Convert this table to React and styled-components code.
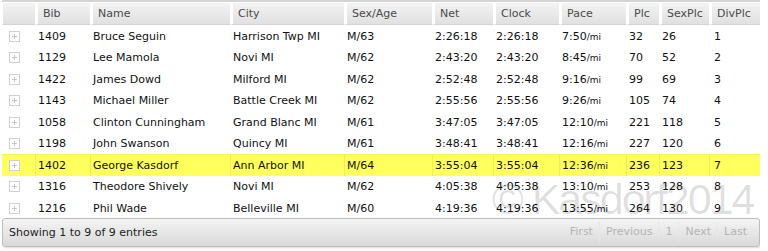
import React from 'react'
import styled, { createGlobalStyle } from 'styled-components';

const rows = [
  ['1409', 'Bruce Seguin', 'Harrison Twp MI', 'M/63', '2:26:18', '2:26:18', '7:50', '32', '26', '1'],
  ['1129', 'Lee Mamola', 'Novi MI', 'M/62', '2:43:20', '2:43:20', '8:45', '70', '52', '2'],
  ['1422', 'James Dowd', 'Milford MI', 'M/62', '2:52:48', '2:52:48', '9:16', '99', '69', '3'],
  ['1143', 'Michael Miller', 'Battle Creek MI', 'M/62', '2:55:56', '2:55:56', '9:26', '105', '74', '4'],
  ['1058', 'Clinton Cunningham', 'Grand Blanc MI', 'M/61', '3:47:05', '3:47:05', '12:10', '221', '118', '5'],
  ['1198', 'John Swanson', 'Quincy MI', 'M/61', '3:48:41', '3:48:41', '12:16', '227', '120', '6'],
  ['1402', 'George Kasdorf', 'Ann Arbor MI', 'M/64', '3:55:04', '3:55:04', '12:36', '236', '123', '7'],
  ['1316', 'Theodore Shively', 'Novi MI', 'M/62', '4:05:38', '4:05:38', '13:10', '253', '128', '8'],
  ['1216', 'Phil Wade', 'Belleville MI', 'M/60', '4:19:36', '4:19:36', '13:55', '264', '130', '9'],
]

const cols = [
  ['', 34], ['Bib', 55], ['Name', 140], ['City', 114], ['Sex/Age', 88], ['Net', 61],
  ['Clock', 66], ['Pace', 67], ['Plc', 33], ['SexPlc', 50], ['DivPlc', 52],
]

const App = () => {
  return (
    <>
      <Global />
      <Wrap>
        <Grid>
          <colgroup>
            {cols.map(([n, w], i) => <col key={i} style={{ width: w }} />)}
          </colgroup>
          <thead>
            <tr>
              {cols.map(([n], i) => <Head key={i}>{n}</Head>)}
            </tr>
          </thead>
          <tbody>
            {rows.map((r) => (
              <Row key={r[0]} hot={r[1] === 'George Kasdorf'}>
                <Cell><Expand /></Cell>
                <Cell>{r[0]}</Cell>
                <Cell>{r[1]}</Cell>
                <Cell>{r[2]}</Cell>
                <Cell>{r[3]}</Cell>
                <Cell>{r[4]}</Cell>
                <Cell>{r[5]}</Cell>
                <Cell>{r[6]}<small>/mi</small></Cell>
                <Cell>{r[7]}</Cell>
                <Cell>{r[8]}</Cell>
                <Cell pad="4px">{r[9]}</Cell>
              </Row>
            ))}
          </tbody>
        </Grid>
        <Footer>
          <span>Showing 1 to 9 of 9 entries</span>
          <Pager>
            <PageBtn>First</PageBtn>
            <PageBtn>Previous</PageBtn>
            <PageBtn>1</PageBtn>
            <PageBtn>Next</PageBtn>
            <PageBtn>Last</PageBtn>
          </Pager>
        </Footer>
        <Mark>©&nbsp;Kasdorf2014</Mark>
      </Wrap>
    </>
  )
}

export default App;

const Global = createGlobalStyle`
body{
    margin: 0;
    background: #fff;
    font-family: "DejaVu Sans", Verdana, sans-serif;
}
`

const Wrap = styled.div`
position: relative;
width: 758px;
height: 251px;
margin-left: 2px;
border-top: 2px solid #d4d4d4;
overflow: hidden;
`

const Grid = styled.table`
width: 758px;
table-layout: fixed;
border-collapse: separate;
border-spacing: 0;
font-size: 11px;
color: #111;
`

const Head = styled.th`
height: 21px;
padding: 0 0 0 5px;
text-align: left;
font-weight: normal;
color: #4a4a4a;
background: linear-gradient(#f3f3f3, #e0e0e0);
border-left: 2px solid #fff;
border-right: 1px solid #fff;
border-top: 1px solid #fff;
border-bottom: 1px solid #d4d4d4;
background-clip: padding-box;
white-space: nowrap;
&:first-child{
    border-left: 1px solid #fff;
}
`

const Row = styled.tr`
height: 21.5px;
background: ${p => (p.hot ? '#ffff5e' : '#fff')};
td{
    border-right: 1px solid ${p => (p.hot ? '#eeee58' : '#fff')};
    border-top: 1px solid ${p => (p.hot ? '#f4f460' : '#fff')};
}
`

const Cell = styled.td`
padding: 0 0 0 ${p => p.pad || '2px'};
white-space: nowrap;
overflow: hidden;
small{
    font-size: 9px;
}
&:first-child{
    padding-left: 7px;
}
`

const Expand = styled.span`
display: block;
position: relative;
width: 9px;
height: 9px;
border: 1px solid #d0d0d0;
background: #fff;
&:before, &:after{
    content: "";
    position: absolute;
    background: #c4c4c4;
}
&:before{
    left: 2px;
    top: 4px;
    width: 5px;
    height: 1px;
}
&:after{
    left: 4px;
    top: 2px;
    width: 1px;
    height: 5px;
}
`

const Footer = styled.div`
display: flex;
align-items: center;
justify-content: space-between;
height: 27px;
margin-top: -1px;
padding: 0 6px 0 6px;
border: 1px solid #bdbdbd;
border-radius: 3px;
background: linear-gradient(#f4f4f4, #d9d9d9);
box-shadow: 1px 1px 2px rgba(0,0,0,0.15);
font-size: 11px;
color: #222;
`

const Pager = styled.div`
display: flex;
align-items: center;
height: 100%;
`

const PageBtn = styled.span`
padding: 0 6px;
line-height: 20px;
color: #b4b4b4;
border-left: 1px solid #e6e6e6;
&:first-child{
    border-left: none;
}
`

const Mark = styled.div`
position: absolute;
left: 490px;
top: 173px;
font-family: "Liberation Sans", Arial, sans-serif;
font-size: 43px;
letter-spacing: -2px;
color: rgba(0,0,0,0.12);
white-space: nowrap;
pointer-events: none;
`
